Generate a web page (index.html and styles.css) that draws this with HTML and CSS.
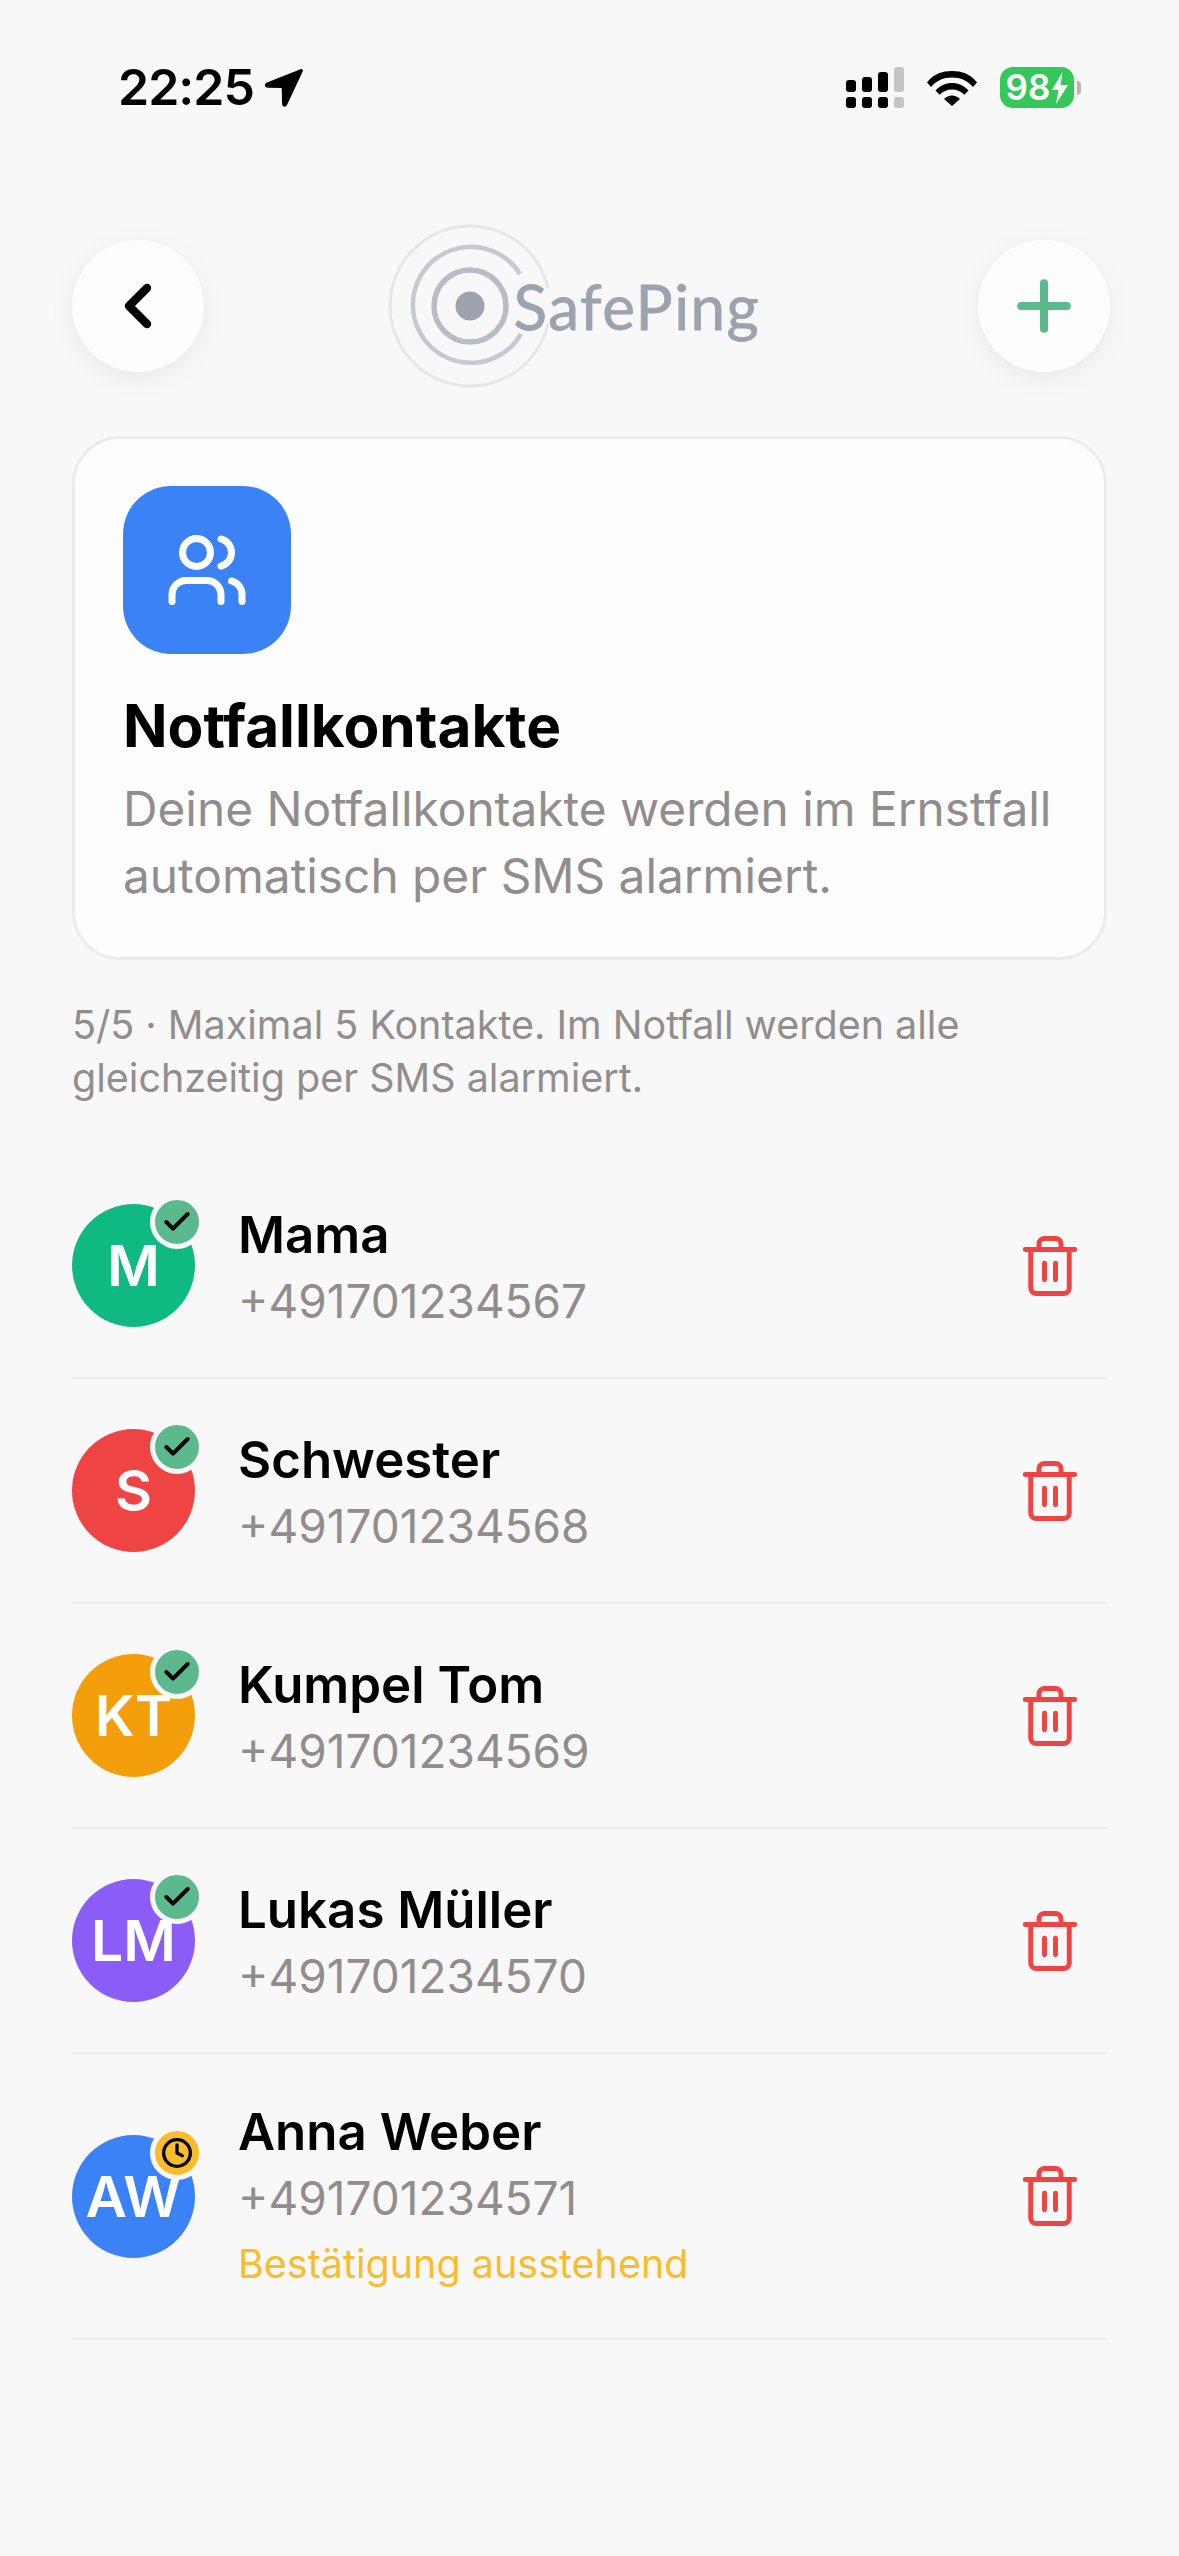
FILE: index.html
```html
<!DOCTYPE html>
<html lang="de">
<head>
<meta charset="utf-8">
<title>SafePing – Notfallkontakte</title>
<link rel="stylesheet" href="styles.css">
</head>
<body>
<div class="app">
  <div class="status">
    <div class="status-left">
      <span class="time">22:25</span>
      <svg class="loc" viewBox="0 0 39 39"><path d="M36.5 1.2 3 14.6c-3 1.2-2.6 5 .9 5.1l13.8.3.4 15.8c.1 3.4 3.9 3.9 5 .9L38.7 3.5c.6-1.700-.6-2.900-2.200-2.300z"/></svg>
    </div>
    <div class="status-right">
      <div class="signal">
        <div class="sig-col"><i class="bar b1"></i><i class="dot"></i></div>
        <div class="sig-col"><i class="bar b2"></i><i class="dot"></i></div>
        <div class="sig-col"><i class="bar b3"></i><i class="dot"></i></div>
        <div class="sig-col off"><i class="bar b4"></i><i class="dot"></i></div>
      </div>
      <svg class="wifi" viewBox="0 0 50 37"><path d="M0 13.500C6.500 5 15 2 25 2s18.500 3 25 11.500L46 18C40.500 11.500 33.500 8.500 25 8.500S9.500 11.500 4 18z"/><path d="M8.500 21.500C13 16.500 18.500 14 25 14s12 2.500 16.500 7.500l-4.200 4.300C34 22.500 30 20.500 25 20.500s-9 2-12.300 5.300z"/><path d="M17 30c2.200-2.200 5-3.500 8-3.500s5.800 1.300 8 3.500l-8 7z"/></svg>
      <div class="battery-wrap">
        <div class="battery"><span class="pct">98</span><svg class="bolt" viewBox="0 0 16 32"><path d="M10.500 0 0 18h6.500L4 32 16 13H8.500z"/></svg></div>
        <i class="cap"></i>
      </div>
    </div>
  </div>

  <header class="header">
    <button class="round-btn">
      <svg class="ico-back" viewBox="0 0 24 24"><path d="m15 18-6-6 6-6"/></svg>
    </button>
    <div class="logo">
      <svg class="rings" viewBox="0 0 164 164">
        <path class="r3" d="M160 64A80 80 0 1 0 160 100"/>
        <path class="r2" d="M132 50A58 58 0 1 0 133 110"/>
        <circle class="r1" cx="82" cy="82" r="36"/>
        <circle class="r0" cx="82" cy="82" r="14.500"/>
      </svg>
      <span class="logo-text">SafePing</span>
    </div>
    <button class="round-btn">
      <svg class="ico-plus" viewBox="0 0 24 24"><path d="M5 12h14M12 5v14"/></svg>
    </button>
  </header>

  <section class="card">
    <div class="card-icon">
      <svg class="ico-users" viewBox="0 0 24 24"><path d="M16 21v-2a4 4 0 0 0-4-4H6a4 4 0 0 0-4 4v2"/><circle cx="9" cy="7" r="4"/><path d="M22 21v-2a4 4 0 0 0-3-3.870"/><path d="M16 3.130a4 4 0 0 1 0 7.750"/></svg>
    </div>
    <h1 class="card-title">Notfallkontakte</h1>
    <p class="card-desc">Deine Notfallkontakte werden im Ernstfall automatisch per SMS alarmiert.</p>
  </section>

  <p class="note">5/5 · Maximal 5 Kontakte. Im Notfall werden alle gleichzeitig per SMS alarmiert.</p>

  <ul class="list">
    <li class="row">
      <div class="avatar green">M<span class="badge ok"><svg viewBox="0 0 24 24"><path d="M20 6 9 17l-5-5"/></svg></span></div>
      <div class="info"><div class="name">Mama</div><div class="phone">+491701234567</div></div>
      <svg class="trash" viewBox="0 0 24 24"><path d="M3 6h18M19 6v14a2 2 0 0 1-2 2H7a2 2 0 0 1-2-2V6M8 6V4a2 2 0 0 1 2-2h4a2 2 0 0 1 2 2v2M10 11v6M14 11v6"/></svg>
    </li>
    <li class="row">
      <div class="avatar red">S<span class="badge ok"><svg viewBox="0 0 24 24"><path d="M20 6 9 17l-5-5"/></svg></span></div>
      <div class="info"><div class="name">Schwester</div><div class="phone">+491701234568</div></div>
      <svg class="trash" viewBox="0 0 24 24"><path d="M3 6h18M19 6v14a2 2 0 0 1-2 2H7a2 2 0 0 1-2-2V6M8 6V4a2 2 0 0 1 2-2h4a2 2 0 0 1 2 2v2M10 11v6M14 11v6"/></svg>
    </li>
    <li class="row">
      <div class="avatar orange">KT<span class="badge ok"><svg viewBox="0 0 24 24"><path d="M20 6 9 17l-5-5"/></svg></span></div>
      <div class="info"><div class="name">Kumpel Tom</div><div class="phone">+491701234569</div></div>
      <svg class="trash" viewBox="0 0 24 24"><path d="M3 6h18M19 6v14a2 2 0 0 1-2 2H7a2 2 0 0 1-2-2V6M8 6V4a2 2 0 0 1 2-2h4a2 2 0 0 1 2 2v2M10 11v6M14 11v6"/></svg>
    </li>
    <li class="row">
      <div class="avatar purple">LM<span class="badge ok"><svg viewBox="0 0 24 24"><path d="M20 6 9 17l-5-5"/></svg></span></div>
      <div class="info"><div class="name">Lukas Müller</div><div class="phone">+491701234570</div></div>
      <svg class="trash" viewBox="0 0 24 24"><path d="M3 6h18M19 6v14a2 2 0 0 1-2 2H7a2 2 0 0 1-2-2V6M8 6V4a2 2 0 0 1 2-2h4a2 2 0 0 1 2 2v2M10 11v6M14 11v6"/></svg>
    </li>
    <li class="row tall">
      <div class="avatar blue">AW<span class="badge wait"><svg viewBox="0 0 24 24"><circle cx="12" cy="12" r="10"/><path d="M12 6v6l4 2"/></svg></span></div>
      <div class="info"><div class="name">Anna Weber</div><div class="phone">+491701234571</div><div class="pending">Bestätigung ausstehend</div></div>
      <svg class="trash" viewBox="0 0 24 24"><path d="M3 6h18M19 6v14a2 2 0 0 1-2 2H7a2 2 0 0 1-2-2V6M8 6V4a2 2 0 0 1 2-2h4a2 2 0 0 1 2 2v2M10 11v6M14 11v6"/></svg>
    </li>
  </ul>
</div>
</body>
</html>
```

FILE: styles.css
```css
* { box-sizing: border-box; }
html, body { margin: 0; padding: 0; }
body { background: #f8f8f8; font-family: Inter, "Liberation Sans", sans-serif; color: #000; }
.app { width: 1179px; height: 2556px; overflow: hidden; padding: 0 72px; }

.status { height: 226px; padding-top: 67px; display: flex; justify-content: space-between; align-items: flex-start; }
.status-left { display: flex; align-items: center; gap: 10px; margin-left: 46px; height: 41px; }
.time { font-size: 50px; font-weight: 600; line-height: 41px; letter-spacing: -1px; }
.loc { width: 39px; height: 39px; fill: #000; }
.status-right { display: flex; align-items: center; gap: 23px; margin-right: 26px; height: 41px; }
.signal { display: flex; gap: 6px; }
.sig-col { width: 10px; height: 41px; display: flex; flex-direction: column; justify-content: flex-end; gap: 5px; }
.bar, .dot { display: block; width: 10px; background: #000; border-radius: 3px; }
.dot { height: 11px; }
.b1 { height: 12px; }
.b2 { height: 15px; }
.b3 { height: 20px; }
.b4 { height: 25px; }
.off .bar, .off .dot { background: #c4c4c4; }
.wifi { width: 50px; height: 37px; fill: #000; }
.battery-wrap { display: flex; align-items: center; gap: 3px; }
.battery { width: 74px; height: 41px; border-radius: 13px; background: #34c759; display: flex; align-items: center; justify-content: center; gap: 2px; color: #fff; }
.pct { font-size: 35px; font-weight: 600; line-height: 41px; }
.bolt { width: 16px; height: 32px; fill: #fff; }
.cap { display: block; width: 4px; height: 14px; background: #b5b5b5; border-radius: 0 4px 4px 0; }

.header { height: 160px; margin: 0 -3px 50px 0; display: flex; justify-content: space-between; align-items: center; }
.round-btn { width: 132px; height: 132px; padding: 0; border: 0; border-radius: 50%; background: #fdfdfd; box-shadow: 0 6px 24px rgba(0,0,0,.07); display: flex; align-items: center; justify-content: center; }
.ico-back { width: 72px; height: 72px; fill: none; stroke: #000; stroke-width: 2.800; stroke-linecap: round; stroke-linejoin: round; }
.ico-plus { width: 78px; height: 78px; fill: none; stroke: #5cb98d; stroke-width: 2.500; stroke-linecap: round; }

.logo { display: flex; align-items: center; width: 368px; height: 164px; margin-right: 39px; }
.rings { width: 164px; height: 164px; flex: none; fill: none; }
.r3 { stroke: #e5e6ea; stroke-width: 3; }
.r2 { stroke: #c6c9d1; stroke-width: 4.500; }
.r1 { stroke: #b8bcc6; stroke-width: 5.500; }
.r0 { fill: #9ca3af; }
.logo-text { margin-left: -38px; font-family: Lato, sans-serif; font-size: 62px; letter-spacing: 1.500px; font-weight: 400; color: #9ca3af; -webkit-text-stroke: .8px #9ca3af; line-height: 60px; white-space: nowrap; }

.card { height: 524px; padding: 47px 48px; background: #fdfdfd; border: 3px solid #ebebeb; border-radius: 48px; }
.card-icon { width: 168px; height: 168px; border-radius: 48px; background: #3b82f6; display: flex; align-items: center; justify-content: center; }
.ico-users { width: 84px; height: 84px; fill: none; stroke: #fff; stroke-width: 2; stroke-linecap: round; stroke-linejoin: round; }
.card-title { margin: 37px 0 0; font-size: 58.500px; font-weight: 700; line-height: 70px; }
.card-desc { margin: 15px 0 0; font-size: 47.800px; line-height: 67px; color: #918d8d; }

.note { margin: 39px 0 0; font-size: 39.500px; line-height: 53px; color: #918d8d; }

.list { list-style: none; margin: 49px 0 0; padding: 0; }
.row { height: 225px; display: flex; align-items: center; border-bottom: 2px solid #ebebeb; }
.row.tall { height: 286px; }
.avatar { position: relative; flex: none; width: 123px; height: 123px; border-radius: 50%; display: flex; align-items: center; justify-content: center; color: #fff; font-size: 57px; font-weight: 600; }
.green { background: #10b981; }
.red { background: #ef4444; }
.orange { background: #f59e0b; }
.purple { background: #8b5cf6; }
.blue { background: #3b82f6; }
.badge { position: absolute; top: -9px; right: -9px; width: 54px; height: 54px; border-radius: 50%; border: 5px solid #f8f8f8; display: flex; align-items: center; justify-content: center; }
.badge svg { fill: none; stroke: #000; stroke-linecap: round; stroke-linejoin: round; }
.badge.ok { background: #5cb98d; }
.badge.ok svg { width: 32px; height: 32px; stroke-width: 3; }
.badge.wait { background: #fbbc2c; }
.badge.wait svg { width: 32px; height: 32px; stroke-width: 2.500; }
.info { flex: 1; margin-left: 43px; padding-top: 4px; }
.name { font-size: 51px; font-weight: 600; line-height: 66px; }
.phone { font-size: 46px; line-height: 66px; color: #918d8d; }
.pending { font-size: 39.500px; line-height: 67px; color: #fbbc2c; }
.trash { flex: none; width: 66px; height: 66px; margin-right: 24px; fill: none; stroke: #ef4444; stroke-width: 1.800; stroke-linecap: round; stroke-linejoin: round; }
```
